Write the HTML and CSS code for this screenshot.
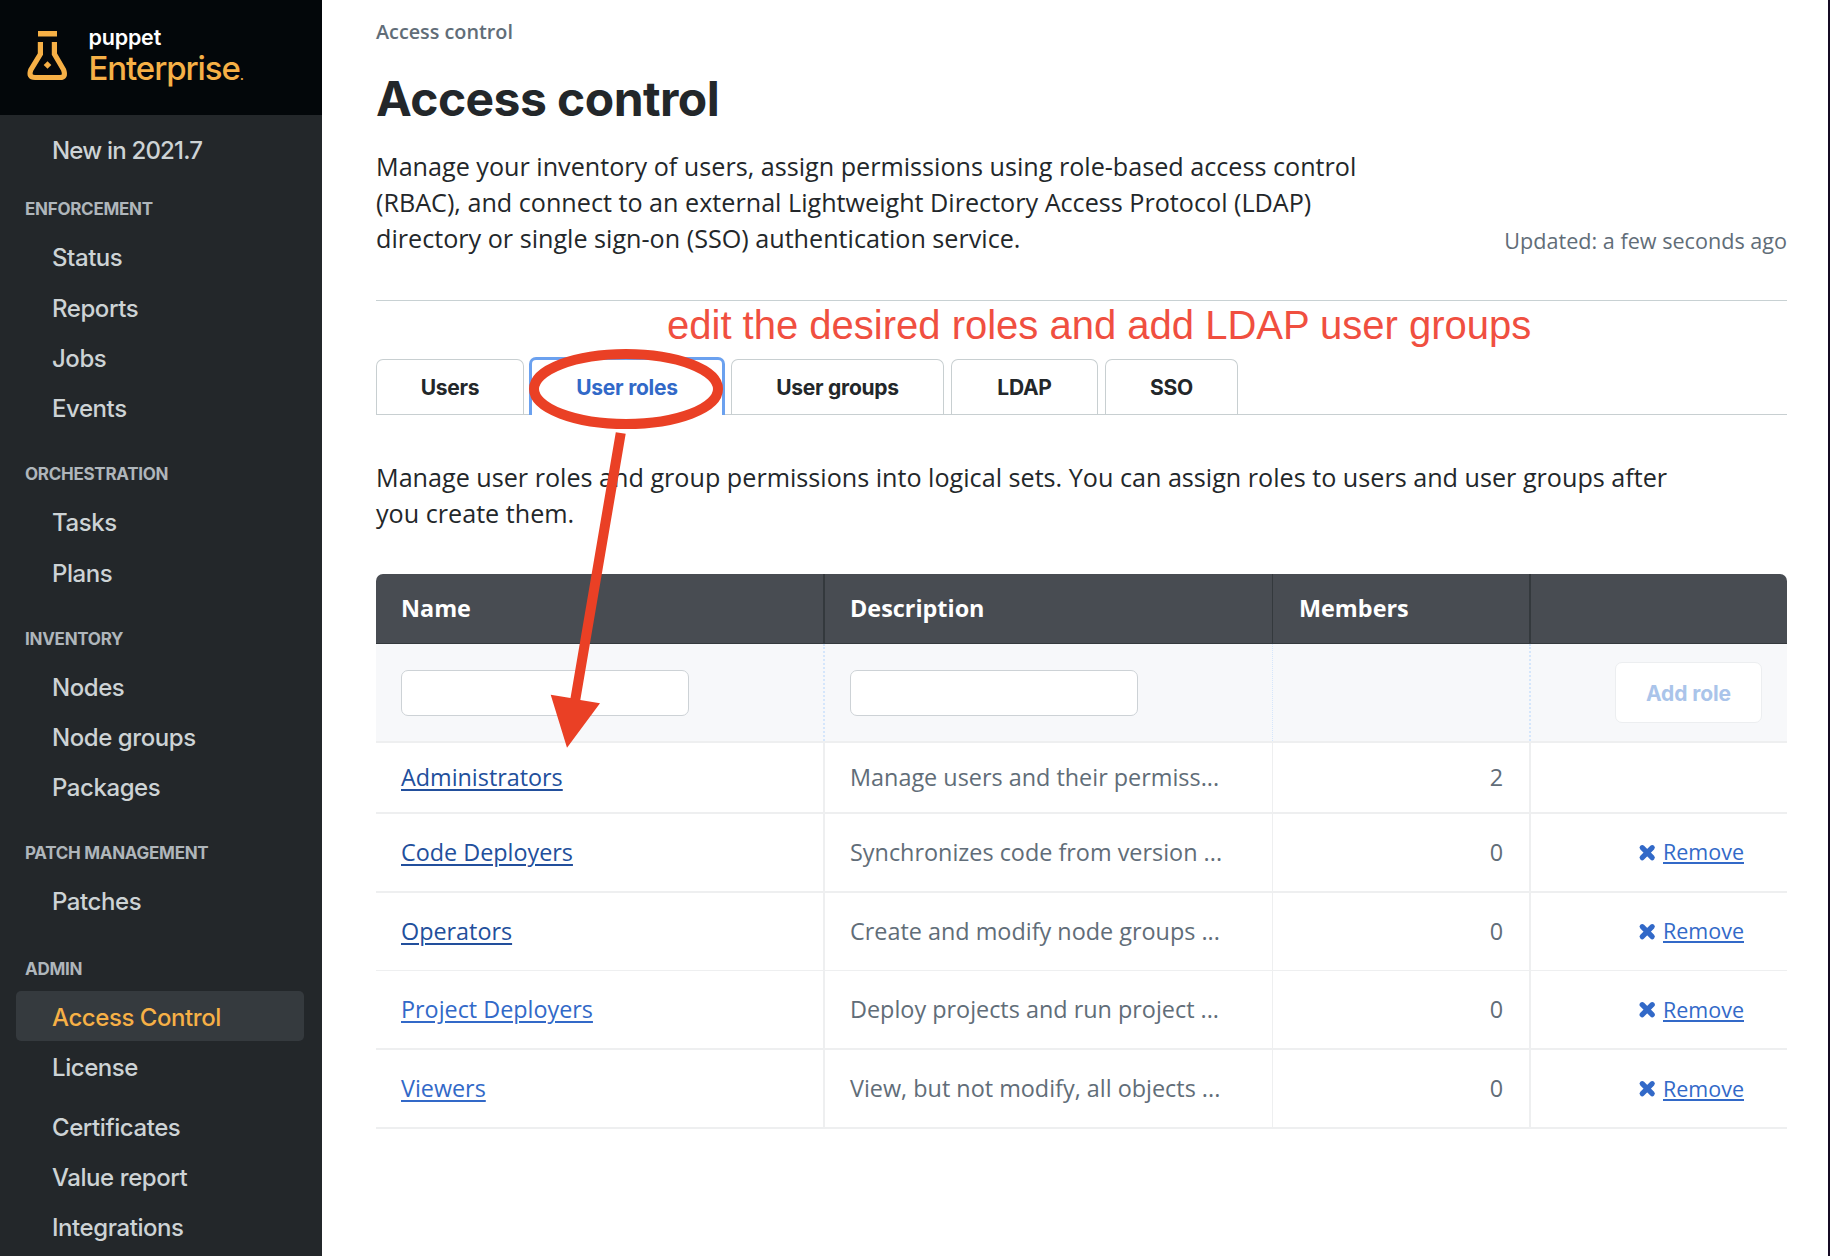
FILE: index.html
```html
<!DOCTYPE html>
<html lang="en">
<head>
<meta charset="utf-8">
<title>Access control</title>
<link rel="stylesheet" href="styles.css">
</head>
<body>
<div class="app">
  <aside class="sidebar">
    <header class="brand">
      <svg class="brand-icon" width="42" height="52" viewBox="0 0 42 52">
        <rect x="12" y="1" width="19" height="5.5" fill="#f6b046"/>
        <path d="M14.4 12 V24 L4.8 39.8 Q2 47.5 9 47.5 H34 Q40.4 47.5 37.6 39.8 L28.4 24 V12" fill="none" stroke="#f6b046" stroke-width="5.2"/>
        <path d="M21.5 31.2 L25.3 35 L21.5 38.8 L17.7 35 Z" fill="#f6b046"/>
      </svg>
      <div class="brand-text">
        <span class="brand-top">puppet</span>
        <span class="brand-name">Enterprise<span class="brand-mark">.</span></span>
      </div>
    </header>
    <nav class="nav">
      <a class="nav-item nav-item-new">New in 2021.7</a>
      <h2 class="nav-title nav-title-first">ENFORCEMENT</h2>
      <a class="nav-item">Status</a>
      <a class="nav-item">Reports</a>
      <a class="nav-item">Jobs</a>
      <a class="nav-item">Events</a>
      <h2 class="nav-title">ORCHESTRATION</h2>
      <a class="nav-item">Tasks</a>
      <a class="nav-item">Plans</a>
      <h2 class="nav-title">INVENTORY</h2>
      <a class="nav-item">Nodes</a>
      <a class="nav-item">Node groups</a>
      <a class="nav-item">Packages</a>
      <h2 class="nav-title">PATCH MANAGEMENT</h2>
      <a class="nav-item">Patches</a>
      <h2 class="nav-title nav-title-admin">ADMIN</h2>
      <a class="nav-item nav-item-active">Access Control</a>
      <a class="nav-item">License</a>
      <a class="nav-item nav-item-spaced">Certificates</a>
      <a class="nav-item">Value report</a>
      <a class="nav-item">Integrations</a>
    </nav>
  </aside>

  <main class="main">
    <div class="breadcrumb">Access control</div>
    <h1 class="title">Access control</h1>
    <div class="intro">
      <p class="text">Manage your inventory of users, assign permissions using role-based access control<br>(RBAC), and connect to an external Lightweight Directory Access Protocol (LDAP)<br>directory or single sign-on (SSO) authentication service.</p>
      <span class="updated">Updated: a few seconds ago</span>
    </div>
    <div class="tabs">
      <a class="tab tab-users">Users</a>
      <a class="tab tab-active">User roles</a>
      <a class="tab tab-groups">User groups</a>
      <a class="tab tab-ldap">LDAP</a>
      <a class="tab tab-sso">SSO</a>
    </div>
    <p class="text tab-text">Manage user roles and group permissions into logical sets. You can assign roles to users and user groups after<br>you create them.</p>

    <div class="table">
      <div class="row row-head">
        <div class="cell">Name</div><div class="cell">Description</div><div class="cell">Members</div><div class="cell"></div>
      </div>
      <div class="row row-filter">
        <div class="cell"><input class="filter" type="text"></div>
        <div class="cell"><input class="filter" type="text"></div>
        <div class="cell"></div>
        <div class="cell cell-add"><button class="add">Add role</button></div>
      </div>
      <div class="row row-first">
        <div class="cell"><a class="link visited">Administrators</a></div><div class="cell">Manage users and their permiss...</div><div class="cell num">2</div><div class="cell"></div>
      </div>
      <div class="row">
        <div class="cell"><a class="link visited">Code Deployers</a></div><div class="cell">Synchronizes code from version ...</div><div class="cell num">0</div>
        <div class="cell action"><svg class="x" width="17" height="17" viewBox="0 0 17 17"><path d="M3.2 3.7 L13.2 13.7 M13.2 3.7 L3.2 13.7"/></svg><a class="remove">Remove</a></div>
      </div>
      <div class="row row-thin">
        <div class="cell"><a class="link visited">Operators</a></div><div class="cell">Create and modify node groups ...</div><div class="cell num">0</div>
        <div class="cell action"><svg class="x" width="17" height="17" viewBox="0 0 17 17"><path d="M3.2 3.7 L13.2 13.7 M13.2 3.7 L3.2 13.7"/></svg><a class="remove">Remove</a></div>
      </div>
      <div class="row">
        <div class="cell"><a class="link">Project Deployers</a></div><div class="cell">Deploy projects and run project ...</div><div class="cell num">0</div>
        <div class="cell action action-low"><svg class="x" width="17" height="17" viewBox="0 0 17 17"><path d="M3.2 3.7 L13.2 13.7 M13.2 3.7 L3.2 13.7"/></svg><a class="remove">Remove</a></div>
      </div>
      <div class="row">
        <div class="cell"><a class="link">Viewers</a></div><div class="cell">View, but not modify, all objects ...</div><div class="cell num">0</div>
        <div class="cell action action-low"><svg class="x" width="17" height="17" viewBox="0 0 17 17"><path d="M3.2 3.7 L13.2 13.7 M13.2 3.7 L3.2 13.7"/></svg><a class="remove">Remove</a></div>
      </div>
    </div>
  </main>

  <div class="note">edit the desired roles and add LDAP user groups</div>
  <svg class="marks" width="1830" height="1256" viewBox="0 0 1830 1256">
    <ellipse cx="626" cy="389" rx="92" ry="35" fill="none" stroke="#ea4025" stroke-width="10"/>
    <path d="M615.8 432.2 L625.7 433.8 L580.3 700 L600 703.3 L567 747.7 L550.7 694.7 L570.5 698 Z" fill="#ea4025"/>
  </svg>
</div>
</body>
</html>
```
FILE: styles.css
```css
* { box-sizing: border-box; }
body { margin: 0; background: #fff; color: #23272a; font-family: "Open Sans", sans-serif; }
h1, h2, p { margin: 0; }

.app { position: relative; display: flex; width: 1830px; height: 1256px; overflow: hidden; border-right: 2px solid #150b24; }

/* Sidebar */
.sidebar { width: 322px; flex: none; background: #23272a; font-family: Inter, sans-serif; }
.brand { display: flex; height: 115px; padding: 30px 0 0 26px; background: #03070a; }
.brand-text { display: flex; flex-direction: column; padding-left: 20.5px; }
.brand-top { color: #fff; font-size: 21.5px; font-weight: 600; line-height: 26px; letter-spacing: -.2px; margin-top: -6px; }
.brand-name { color: #f6b046; font-size: 33px; font-weight: 500; line-height: 40px; letter-spacing: -1.1px; margin-top: -2.5px; }
.brand-mark { font-size: 14px; }

.nav { display: flex; flex-direction: column; padding: 9px 18px 0 16px; }
.nav-item { height: 50.3px; padding-left: 36px; border-radius: 5px; color: #cdd3d5; font-size: 24px; font-weight: 450; line-height: 53px; letter-spacing: -.43px; }
.nav-item-new { letter-spacing: -.8px; }
.nav-item-active { background: #353a3e; color: #f6b046; }
.nav-item-spaced { margin-top: 9.4px; }
.nav-title { height: 24px; margin: 29.8px 0 10px; padding-left: 9px; color: #afb6bb; font-size: 17px; font-weight: 700; line-height: 24px; letter-spacing: -.28px; }
.nav-title-first { margin-top: 23px; }
.nav-title-admin { margin-top: 31px; }

/* Page header */
.main { width: 1411px; margin-left: 54px; }
.breadcrumb { padding-top: 18px; color: #616d78; font-size: 19.8px; font-weight: 600; line-height: 28px; }
.title { margin-top: 24px; font-family: Inter, sans-serif; font-size: 48px; font-weight: 750; line-height: 58px; letter-spacing: -.55px; }
.intro { display: flex; justify-content: space-between; align-items: flex-end; height: 153px; margin-top: 20px; padding-bottom: 44px; border-bottom: 1px solid #c8d1d3; }
.text { font-size: 25.17px; line-height: 36px; white-space: nowrap; }
.updated { color: #616d78; font-size: 21.6px; line-height: 30px; }

/* Tabs */
.tabs { display: flex; align-items: flex-end; height: 58px; margin-top: 56px; border-bottom: 1px solid #c8cfd1; }
.tab { height: 55px; border: 1px solid #c8cfd1; border-bottom: 0; border-radius: 7px 7px 0 0; font-family: Inter, sans-serif; font-size: 21px; font-weight: 700; line-height: 56px; letter-spacing: -.25px; text-align: center; }
.tab-users { width: 148px; }
.tab-active { width: 196px; height: 58px; margin: 0 6px 0 5px; border: 3px solid #6ba1ef; border-bottom: 0; margin-bottom: -1px; background: #fff; color: #3269c8; }
.tab-groups { width: 213px; }
.tab-ldap { width: 147px; margin-left: 7px; }
.tab-sso { width: 133px; margin-left: 7px; }
.tab-text { margin-top: 44px; }

/* Roles table */
.table { margin-top: 43px; border-radius: 7px 7px 0 0; overflow: hidden; font-size: 23.4px; line-height: 32px; color: #616d78; }
.row { display: grid; grid-template-columns: 447px 449px 257px 258px; height: 79px; border-bottom: 2px solid #eeeff0; }
.cell { display: flex; align-items: center; padding: 0 0 2px 25px; border-left: 2px solid #eeeff0; white-space: nowrap; }
.cell:first-child { border-left: 0; }
.cell:nth-child(3) { padding-left: 26px; border-left-width: 1px; }
.row-head { height: 70px; background: #484c52; border-bottom: 1px solid #34393d; color: #fff; font-weight: 700; }
.row-head .cell { border-left-color: #34393d; }
.row-filter { height: 99px; background: #f7f8fa; }
.row-filter .cell { padding-bottom: 0; border-left: 2px dotted #d5e6fb; }
.row-filter .cell:first-child { border-left: 0; }
.row-filter .cell:nth-child(3) { border-left-width: 1px; }
.row-first { height: 71px; }
.row-thin { height: 78px; border-bottom-width: 1px; }
.filter { width: 288px; height: 46px; padding: 0 12px; border: 1px solid #cdd2d6; border-radius: 7px; background: #fff; font: inherit; }
.num.cell { justify-content: flex-end; padding-right: 26px; }
.cell.cell-add { justify-content: flex-end; padding-right: 25px; }
.add { width: 147px; height: 61px; padding: 2px 0 0; border: 1px solid #eceef0; border-radius: 7px; background: #fff; color: #aac4ea; font-family: Inter, sans-serif; font-size: 21px; font-weight: 700; letter-spacing: -.1px; }
.link { color: #3269c8; font-size: 23.35px; text-decoration: underline; text-decoration-thickness: 2px; text-underline-offset: 3px; }
.link.visited { color: #224f9c; }
.cell.action { justify-content: flex-end; gap: 7px; padding-right: 43px; padding-bottom: 1px; }
.cell.action-low { padding-bottom: 0; }
.remove { color: #3269c8; font-size: 21.5px; text-decoration: underline; text-decoration-thickness: 2px; text-underline-offset: 2px; }
.x { stroke: #3269c8; stroke-width: 5.2; stroke-linecap: round; overflow: visible; }

/* Annotations drawn over the page */
.note { position: absolute; left: 667px; top: 302px; color: #f04f40; font-family: "Liberation Sans", sans-serif; font-size: 40px; line-height: 46px; white-space: nowrap; }
.marks { position: absolute; left: 0; top: 0; pointer-events: none; }
```
